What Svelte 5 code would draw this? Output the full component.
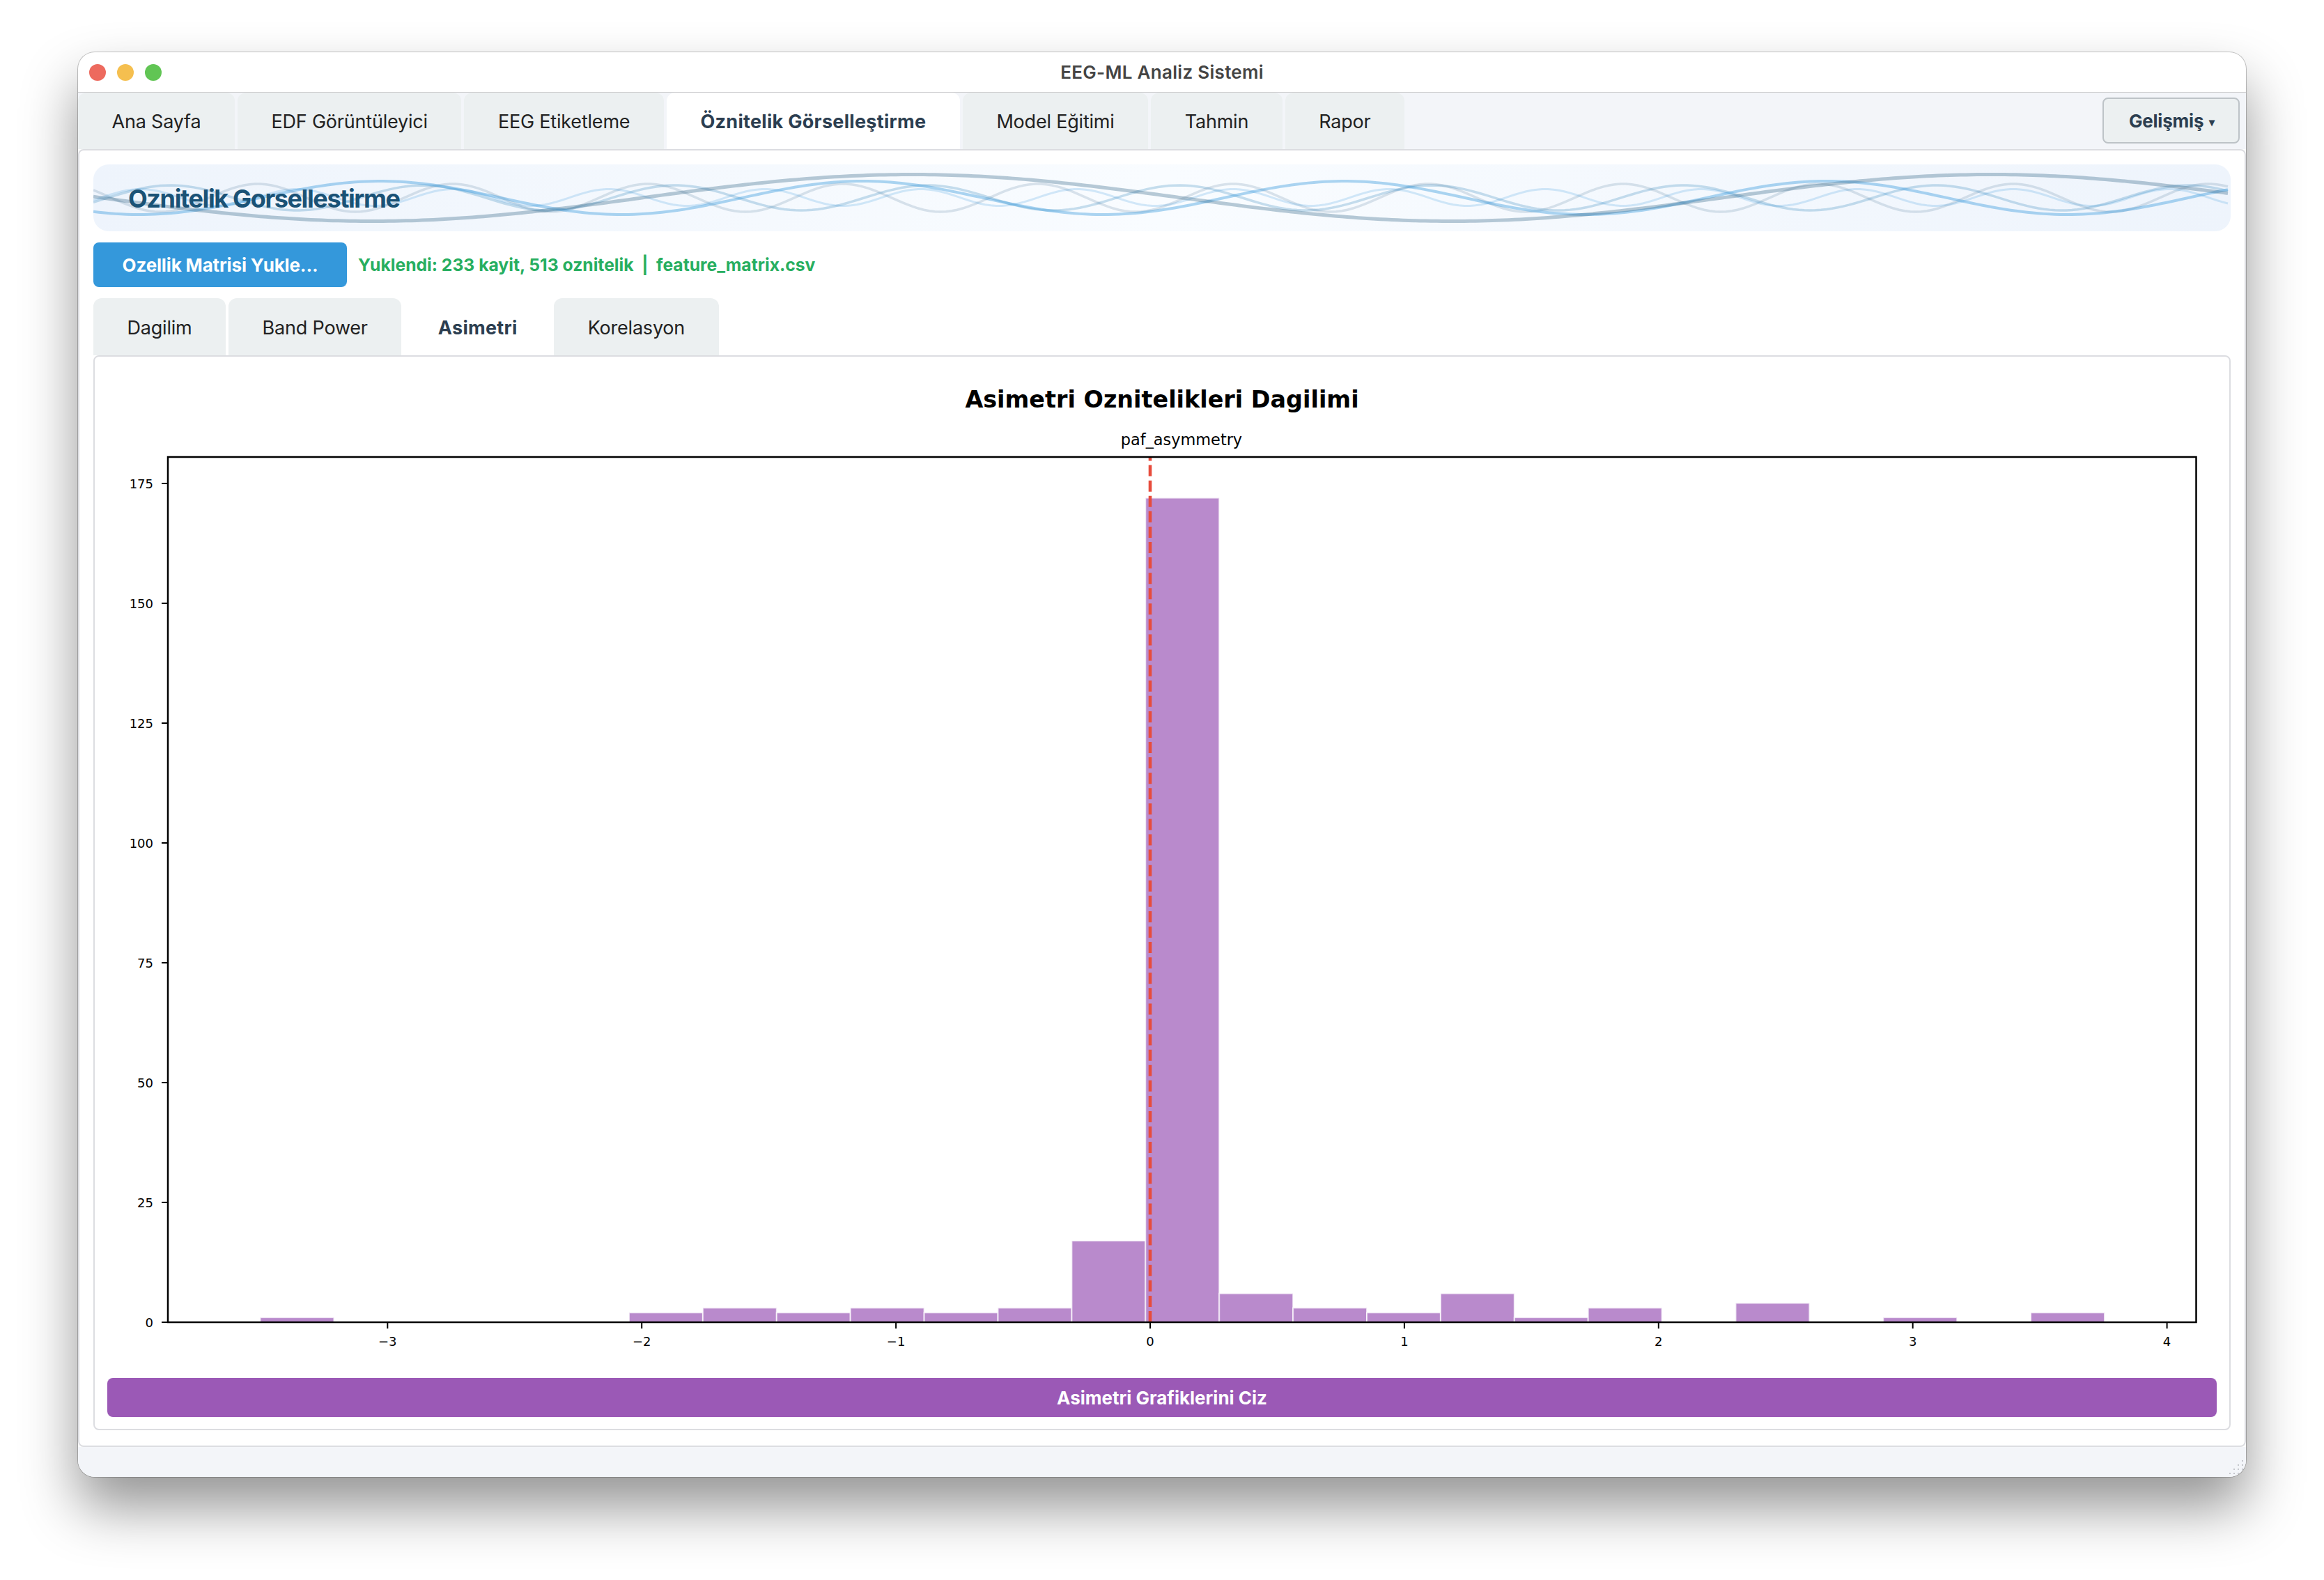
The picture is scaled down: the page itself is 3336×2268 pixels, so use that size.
<script>
  const tabs = ['Ana Sayfa', 'EDF Görüntüleyici', 'EEG Etiketleme', 'Öznitelik Görselleştirme', 'Model Eğitimi', 'Tahmin', 'Rapor'];
  const subTabs = ['Dagilim', 'Band Power', 'Asimetri', 'Korelasyon'];
  let activeTab = 3;
  let activeSub = 2;

  // banner waves: [amplitude, period, peak x, center y, colour, opacity, width]
  const waveDefs = [
    [20, 280, 2756, 48, '#1a5276', 0.15, 3.5],
    [12, 224, 2756, 47.5, '#3498db', 0.2, 3],
    [18, 362, 2283, 48, '#2980b9', 0.25, 3.5],
    [24, 692, 412, 48, '#3498db', 0.4, 4],
    [33.5, 1550, 1175, 48, '#1a5276', 0.3, 5]
  ];

  function wavePath([amp, period, peak, cy]) {
    let d = '';
    for (let x = 0; x <= 3068; x += 8) {
      const y = cy - amp * Math.cos((2 * Math.PI * (x - peak)) / period);
      d += (x ? 'L' : 'M') + x + ' ' + y.toFixed(2);
    }
    return d;
  }

  // histogram, all in px inside the chart svg
  const ax = { left: 87, right: 2998.5, top: 144, bottom: 1386 };
  const counts = [1, 0, 0, 0, 0, 2, 3, 2, 3, 2, 3, 17, 172, 6, 3, 2, 6, 1, 3, 0, 4, 0, 1, 0, 2];
  const binW = 105.9;
  const firstBin = 219.5;
  const unitY = 172 / 25;
  const zeroX = 1497;
  const unitX = 364.9;
  const xTicks = [-3, -2, -1, 0, 1, 2, 3, 4];
  const yTicks = [0, 25, 50, 75, 100, 125, 150, 175];
</script>

<div class="window">
  <div class="titlebar">
    <span class="dot red"></span>
    <span class="dot yellow"></span>
    <span class="dot green"></span>
    <span class="title">EEG-ML Analiz Sistemi</span>
  </div>

  <div class="tabbar">
    {#each tabs as tab, i}
      <button class="tab" class:active={i === activeTab} onclick={() => (activeTab = i)}>{tab}</button>
    {/each}
    <button class="advanced">Gelişmiş <span class="arrow">▾</span></button>
  </div>

  <main class="content">
    <div class="banner">
      <svg class="waves" width="3068" height="96" viewBox="0 0 3068 96">
        {#each waveDefs as w}
          <path d={wavePath(w)} fill="none" stroke={w[4]} stroke-opacity={w[5]} stroke-width={w[6]} />
        {/each}
      </svg>
      <h1>Oznitelik Gorsellestirme</h1>
    </div>

    <div class="toolbar">
      <button class="load">Ozellik Matrisi Yukle...</button>
      <span class="status">Yuklendi: 233 kayit, 513 oznitelik &nbsp;|&nbsp; feature_matrix.csv</span>
    </div>

    <div class="subtabs">
      {#each subTabs as tab, i}
        <button class="subtab" class:active={i === activeSub} onclick={() => (activeSub = i)}>{tab}</button>
      {/each}
    </div>

    <div class="pane">
      <svg class="chart" width="3028" height="1450" viewBox="0 0 3028 1450">
        <text class="fig-title" x="1514" y="73" text-anchor="middle">Asimetri Oznitelikleri Dagilimi</text>
        <text class="ax-title" x="1542" y="127" text-anchor="middle">paf_asymmetry</text>

        {#each counts as c, i}
          {#if c > 0}
            <rect
              x={firstBin + i * binW}
              y={ax.bottom - c * unitY}
              width={binW}
              height={c * unitY}
              fill="#9b59b6"
              fill-opacity="0.7"
              stroke="#fff"
              stroke-opacity="0.7"
              stroke-width="2"
            />
          {/if}
        {/each}

        <line x1={zeroX} y1={ax.bottom} x2={zeroX} y2={ax.top} stroke="#e74c3c" stroke-width="4.6" stroke-dasharray="16 6.08" />

        <rect x={ax.left} y={ax.top} width={ax.right - ax.left} height={ax.bottom - ax.top} fill="none" stroke="#000" stroke-width="2.5" />

        {#each xTicks as t}
          <line x1={zeroX + t * unitX} y1={ax.bottom} x2={zeroX + t * unitX} y2={ax.bottom + 9} stroke="#000" stroke-width="2" />
          <text class="tick" x={zeroX + t * unitX} y={ax.bottom + 34} text-anchor="middle">{t < 0 ? '−' + -t : t}</text>
        {/each}
        {#each yTicks as t}
          <line x1={ax.left - 9} y1={ax.bottom - t * unitY} x2={ax.left} y2={ax.bottom - t * unitY} stroke="#000" stroke-width="2" />
          <text class="tick" x={ax.left - 21} y={ax.bottom - t * unitY + 6.5} text-anchor="end">{t}</text>
        {/each}
      </svg>
      <button class="draw">Asimetri Grafiklerini Ciz</button>
    </div>
  </main>

  <div class="statusbar">
    <svg class="grip" width="24" height="24" viewBox="0 0 24 24" fill="#c4c6cc">
      <rect x="20" y="2" width="2" height="2" /><rect x="20" y="8" width="2" height="2" /><rect x="20" y="14" width="2" height="2" />
      <rect x="14" y="8" width="2" height="2" /><rect x="14" y="14" width="2" height="2" /><rect x="14" y="20" width="2" height="2" />
      <rect x="8" y="14" width="2" height="2" /><rect x="8" y="20" width="2" height="2" /><rect x="2" y="20" width="2" height="2" />
    </svg>
  </div>
</div>

<style>
  :global(body) {
    background: #fff;
    font-family: Inter, "Liberation Sans", sans-serif;
  }

  button {
    font-family: inherit;
    border: none;
    cursor: pointer;
  }

  .window {
    width: 3112px;
    height: 2045px;
    margin: 75px 0 148px 112px;
    display: flex;
    flex-direction: column;
    background: #fff;
    border-radius: 24px;
    overflow: hidden;
    box-shadow: 0 0 0 1px rgba(0, 0, 0, 0.22), 0 44px 80px rgba(0, 0, 0, 0.42);
  }

  .titlebar {
    height: 57px;
    flex: none;
    position: relative;
    display: flex;
    align-items: center;
    gap: 16px;
    padding-left: 16px;
    border-bottom: 1px solid #cdcdcf;
    box-sizing: content-box;
  }

  .dot {
    width: 24px;
    height: 24px;
    border-radius: 50%;
  }

  .red { background: #ed6a5e; }
  .yellow { background: #f5bf4f; }
  .green { background: #61c554; }

  .title {
    position: absolute;
    left: 0;
    right: 0;
    text-align: center;
    font-size: 26px;
    font-weight: 600;
    letter-spacing: 0.3px;
    color: #444;
  }

  .tabbar {
    height: 81px;
    flex: none;
    display: flex;
    gap: 4px;
    background: #f3f5f9;
  }

  .tab {
    padding: 2px 48.5px 0;
    background: #ecf0f1;
    color: #222;
    font-size: 27px;
    letter-spacing: -0.2px;
    border-radius: 12px 12px 0 0;
  }

  .tab.active {
    background: #fff;
    color: #2c3e50;
    font-weight: 700;
    letter-spacing: 0.3px;
  }

  .advanced {
    margin: 7px 9px 8px auto;
    width: 197px;
    padding-right: 4px;
    background: #ecf0f1;
    border: 2px solid #bdc3c7;
    border-radius: 8px;
    color: #2c3e50;
    font-size: 26px;
    font-weight: 700;
    letter-spacing: -0.2px;
  }

  .arrow {
    font-size: 16px;
    vertical-align: 2px;
    margin-left: 2px;
  }

  .content {
    flex: 1;
    min-height: 0;
    box-sizing: border-box;
    display: flex;
    flex-direction: column;
    padding: 20px 20px 22px;
    border: 2px solid #dcdde1;
    border-radius: 8px;
    background: #fff;
  }

  .banner {
    height: 96px;
    flex: none;
    position: relative;
    overflow: hidden;
    display: flex;
    align-items: center;
    padding: 2px 0 0 50px;
    box-sizing: border-box;
    border-radius: 22px;
    background: linear-gradient(90deg, #eef4fc, #f9fcff 50%, #eef4fc);
  }

  .waves {
    position: absolute;
    left: 0;
    top: 0;
  }

  h1 {
    position: relative;
    margin: 0;
    font-size: 36px;
    font-weight: 700;
    letter-spacing: -1.37px;
    color: #1a5276;
  }

  .toolbar {
    flex: none;
    display: flex;
    align-items: center;
    gap: 16px;
    margin-top: 16px;
  }

  .load {
    width: 364px;
    height: 64px;
    background: #3498db;
    color: #fff;
    font-size: 26px;
    font-weight: 700;
    letter-spacing: -0.15px;
    border-radius: 8px;
  }

  .status {
    color: #27ae60;
    font-size: 24.7px;
    font-weight: 700;
  }

  .subtabs {
    flex: none;
    display: flex;
    gap: 4px;
    height: 82px;
    margin-top: 16px;
  }

  .subtab {
    padding: 2px 48.5px 0;
    background: #ecf0f1;
    color: #222;
    font-size: 27px;
    letter-spacing: -0.2px;
    border-radius: 12px 12px 0 0;
  }

  .subtab.active {
    background: #fff;
    color: #2c3e50;
    font-weight: 700;
    letter-spacing: 0.3px;
  }

  .pane {
    flex: 1;
    min-height: 0;
    box-sizing: border-box;
    display: flex;
    flex-direction: column;
    padding: 0 18px 17px;
    border: 2px solid #dcdde1;
    border-radius: 8px;
  }

  .chart {
    flex: none;
    display: block;
  }

  .fig-title {
    font-family: "DejaVu Sans", sans-serif;
    font-weight: 700;
    font-size: 33.4px;
    fill: #000;
  }

  .ax-title {
    font-family: "DejaVu Sans", sans-serif;
    font-size: 22.4px;
    fill: #000;
  }

  .tick {
    font-family: "DejaVu Sans", sans-serif;
    font-size: 18px;
    fill: #000;
  }

  .draw {
    margin-top: 16px;
    height: 56px;
    flex: none;
    background: #9b59b6;
    color: #fff;
    font-size: 26px;
    font-weight: 700;
    border-radius: 8px;
  }

  .statusbar {
    height: 43px;
    flex: none;
    position: relative;
    background: #f3f5f9;
  }

  .grip {
    position: absolute;
    right: 2px;
    bottom: 2px;
  }
</style>
